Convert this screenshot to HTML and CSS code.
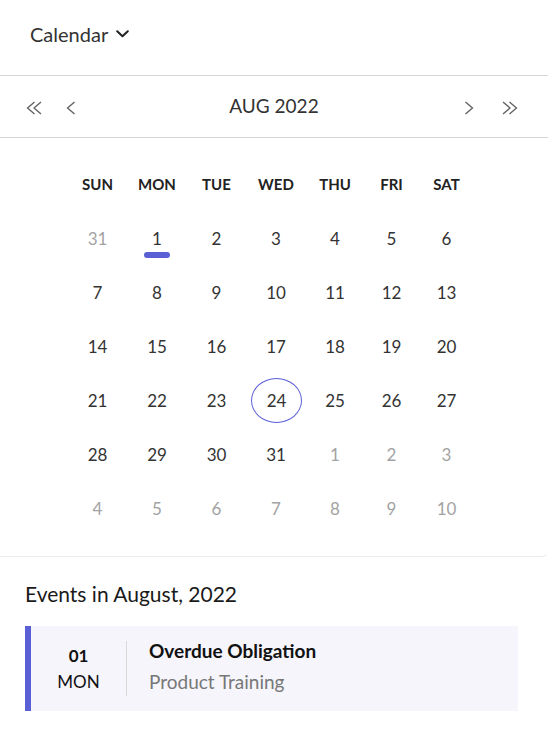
FILE: index.html
```html
<!DOCTYPE html>
<html lang="en">
<head>
<meta charset="utf-8">
<title>Calendar</title>
<link rel="stylesheet" href="styles.css">
</head>
<body>
<div class="calendar-box">
  <div class="header">
    <span class="header-title">Calendar</span>
    <svg class="caret" width="13" height="8" viewBox="0 0 13 8"><path d="M1.2 1.2 L6.5 6.3 L11.8 1.2" fill="none" stroke="#222" stroke-width="2" stroke-linecap="round" stroke-linejoin="round"/></svg>
  </div>
  <div class="nav">
    <div class="nav-left">
      <svg class="dbl" width="17" height="14" viewBox="0 0 17 14"><path d="M8.5 1 L1.5 7 L8.5 13 M15 1 L8 7 L15 13" fill="none" stroke="#666" stroke-width="1.5" stroke-linejoin="round"/></svg>
      <svg class="sgl" width="10" height="14" viewBox="0 0 10 14"><path d="M8.5 1 L1.5 7 L8.5 13" fill="none" stroke="#666" stroke-width="1.5" stroke-linejoin="round"/></svg>
    </div>
    <div class="nav-title">AUG 2022</div>
    <div class="nav-right">
      <svg class="sgl" width="10" height="14" viewBox="0 0 10 14"><path d="M1.5 1 L8.5 7 L1.5 13" fill="none" stroke="#666" stroke-width="1.5" stroke-linejoin="round"/></svg>
      <svg class="dbl" width="17" height="14" viewBox="0 0 17 14"><path d="M2 1 L9 7 L2 13 M8.5 1 L15.5 7 L8.5 13" fill="none" stroke="#666" stroke-width="1.5" stroke-linejoin="round"/></svg>
    </div>
  </div>
  <div class="grid">
    <div class="wd">SUN</div><div class="wd">MON</div><div class="wd">TUE</div><div class="wd">WED</div><div class="wd">THU</div><div class="wd">FRI</div><div class="wd">SAT</div>

    <div class="day muted">31</div><div class="day has-event">1</div><div class="day">2</div><div class="day">3</div><div class="day">4</div><div class="day">5</div><div class="day">6</div>
    <div class="day">7</div><div class="day">8</div><div class="day">9</div><div class="day">10</div><div class="day">11</div><div class="day">12</div><div class="day">13</div>
    <div class="day">14</div><div class="day">15</div><div class="day">16</div><div class="day">17</div><div class="day">18</div><div class="day">19</div><div class="day">20</div>
    <div class="day">21</div><div class="day">22</div><div class="day">23</div><div class="day today"><span class="ring">24</span></div><div class="day">25</div><div class="day">26</div><div class="day">27</div>
    <div class="day">28</div><div class="day">29</div><div class="day">30</div><div class="day">31</div><div class="day muted">1</div><div class="day muted">2</div><div class="day muted">3</div>
    <div class="day muted">4</div><div class="day muted">5</div><div class="day muted">6</div><div class="day muted">7</div><div class="day muted">8</div><div class="day muted">9</div><div class="day muted">10</div>
  </div>
</div>

<div class="events">
  <h2 class="events-title">Events in August, 2022</h2>
  <div class="event-card">
    <div class="event-date">
      <div class="event-day">01</div>
      <div class="event-wd">MON</div>
    </div>
    <div class="event-info">
      <div class="event-name">Overdue Obligation</div>
      <div class="event-type">Product Training</div>
    </div>
  </div>
</div>
</body>
</html>
```

FILE: styles.css
```css
html, body {
  margin: 0;
  padding: 0;
  background: #fff;
}

body {
  font-family: Lato, "Open Sans", "Liberation Sans", sans-serif;
  color: #333;
}

.calendar-box {
  border-bottom: 1px solid #ebebeb;
  border-bottom-right-radius: 6px;
}

.header {
  height: 67px;
  padding: 0 0 8px 30px;
  display: flex;
  align-items: center;
  gap: 8px;
  border-bottom: 1px solid #d6d6d6;
}

.header-title {
  font-size: 20px;
  color: #333;
}

.caret {
  display: block;
  margin-top: 1px;
}

.nav {
  height: 61px;
  display: grid;
  grid-template-columns: 1fr auto 1fr;
  align-items: center;
  border-bottom: 1px solid #d6d6d6;
}

.nav svg {
  display: block;
}

.nav-left {
  display: flex;
  align-items: center;
  gap: 23px;
  padding-left: 26px;
  margin-top: 3px;
}

.nav-right {
  display: flex;
  align-items: center;
  justify-content: flex-end;
  gap: 27px;
  padding-right: 30px;
  margin-top: 3px;
}

.nav-title {
  font-size: 19px;
  color: #333;
  margin-bottom: 2px;
}

.grid {
  display: grid;
  grid-template-columns: 59px 60px 59px 60px 58px 55px 55px;
  grid-auto-rows: 54px;
  padding: 19px 0 21px 68px;
}

.wd {
  display: flex;
  align-items: center;
  justify-content: center;
  font-size: 15px;
  font-weight: 700;
  color: #222;
}

.day {
  position: relative;
  display: flex;
  align-items: center;
  justify-content: center;
  font-size: 17px;
  color: #333;
}

.day.muted {
  color: #a3a3a3;
}

.has-event::after {
  content: "";
  position: absolute;
  left: 50%;
  top: 50%;
  width: 26px;
  height: 6px;
  margin-left: -13px;
  margin-top: 14px;
  border-radius: 3px;
  background: #5a5fd6;
}

.ring {
  box-sizing: border-box;
  width: 51px;
  height: 45px;
  display: flex;
  align-items: center;
  justify-content: center;
  border: 1.5px solid #5a5fd6;
  border-radius: 50%;
  margin-left: 1px;
}

.events {
  padding: 25px 30px 0 25px;
}

.events-title {
  margin: 0 0 20px 0;
  font-size: 21px;
  line-height: 24px;
  font-weight: 400;
  color: #1a1a1a;
}

.event-card {
  display: flex;
  align-items: center;
  height: 55px;
  padding: 15px 0;
  background: #f5f5fb;
  border-left: 6px solid #5a5fd6;
}

.event-date {
  box-sizing: border-box;
  width: 96px;
  height: 55px;
  border-right: 1px solid #d9d9d9;
  display: flex;
  flex-direction: column;
  align-items: center;
  justify-content: center;
  color: #111;
}

.event-day {
  font-size: 17px;
  font-weight: 700;
  line-height: 26px;
}

.event-wd {
  font-size: 17px;
  line-height: 26px;
}

.event-info {
  padding-left: 22px;
  display: flex;
  flex-direction: column;
  gap: 7px;
  margin-top: -4px;
}

.event-name {
  font-size: 19px;
  font-weight: 700;
  line-height: 24px;
  color: #111;
}

.event-type {
  font-size: 19px;
  line-height: 24px;
  color: #777;
}
```
